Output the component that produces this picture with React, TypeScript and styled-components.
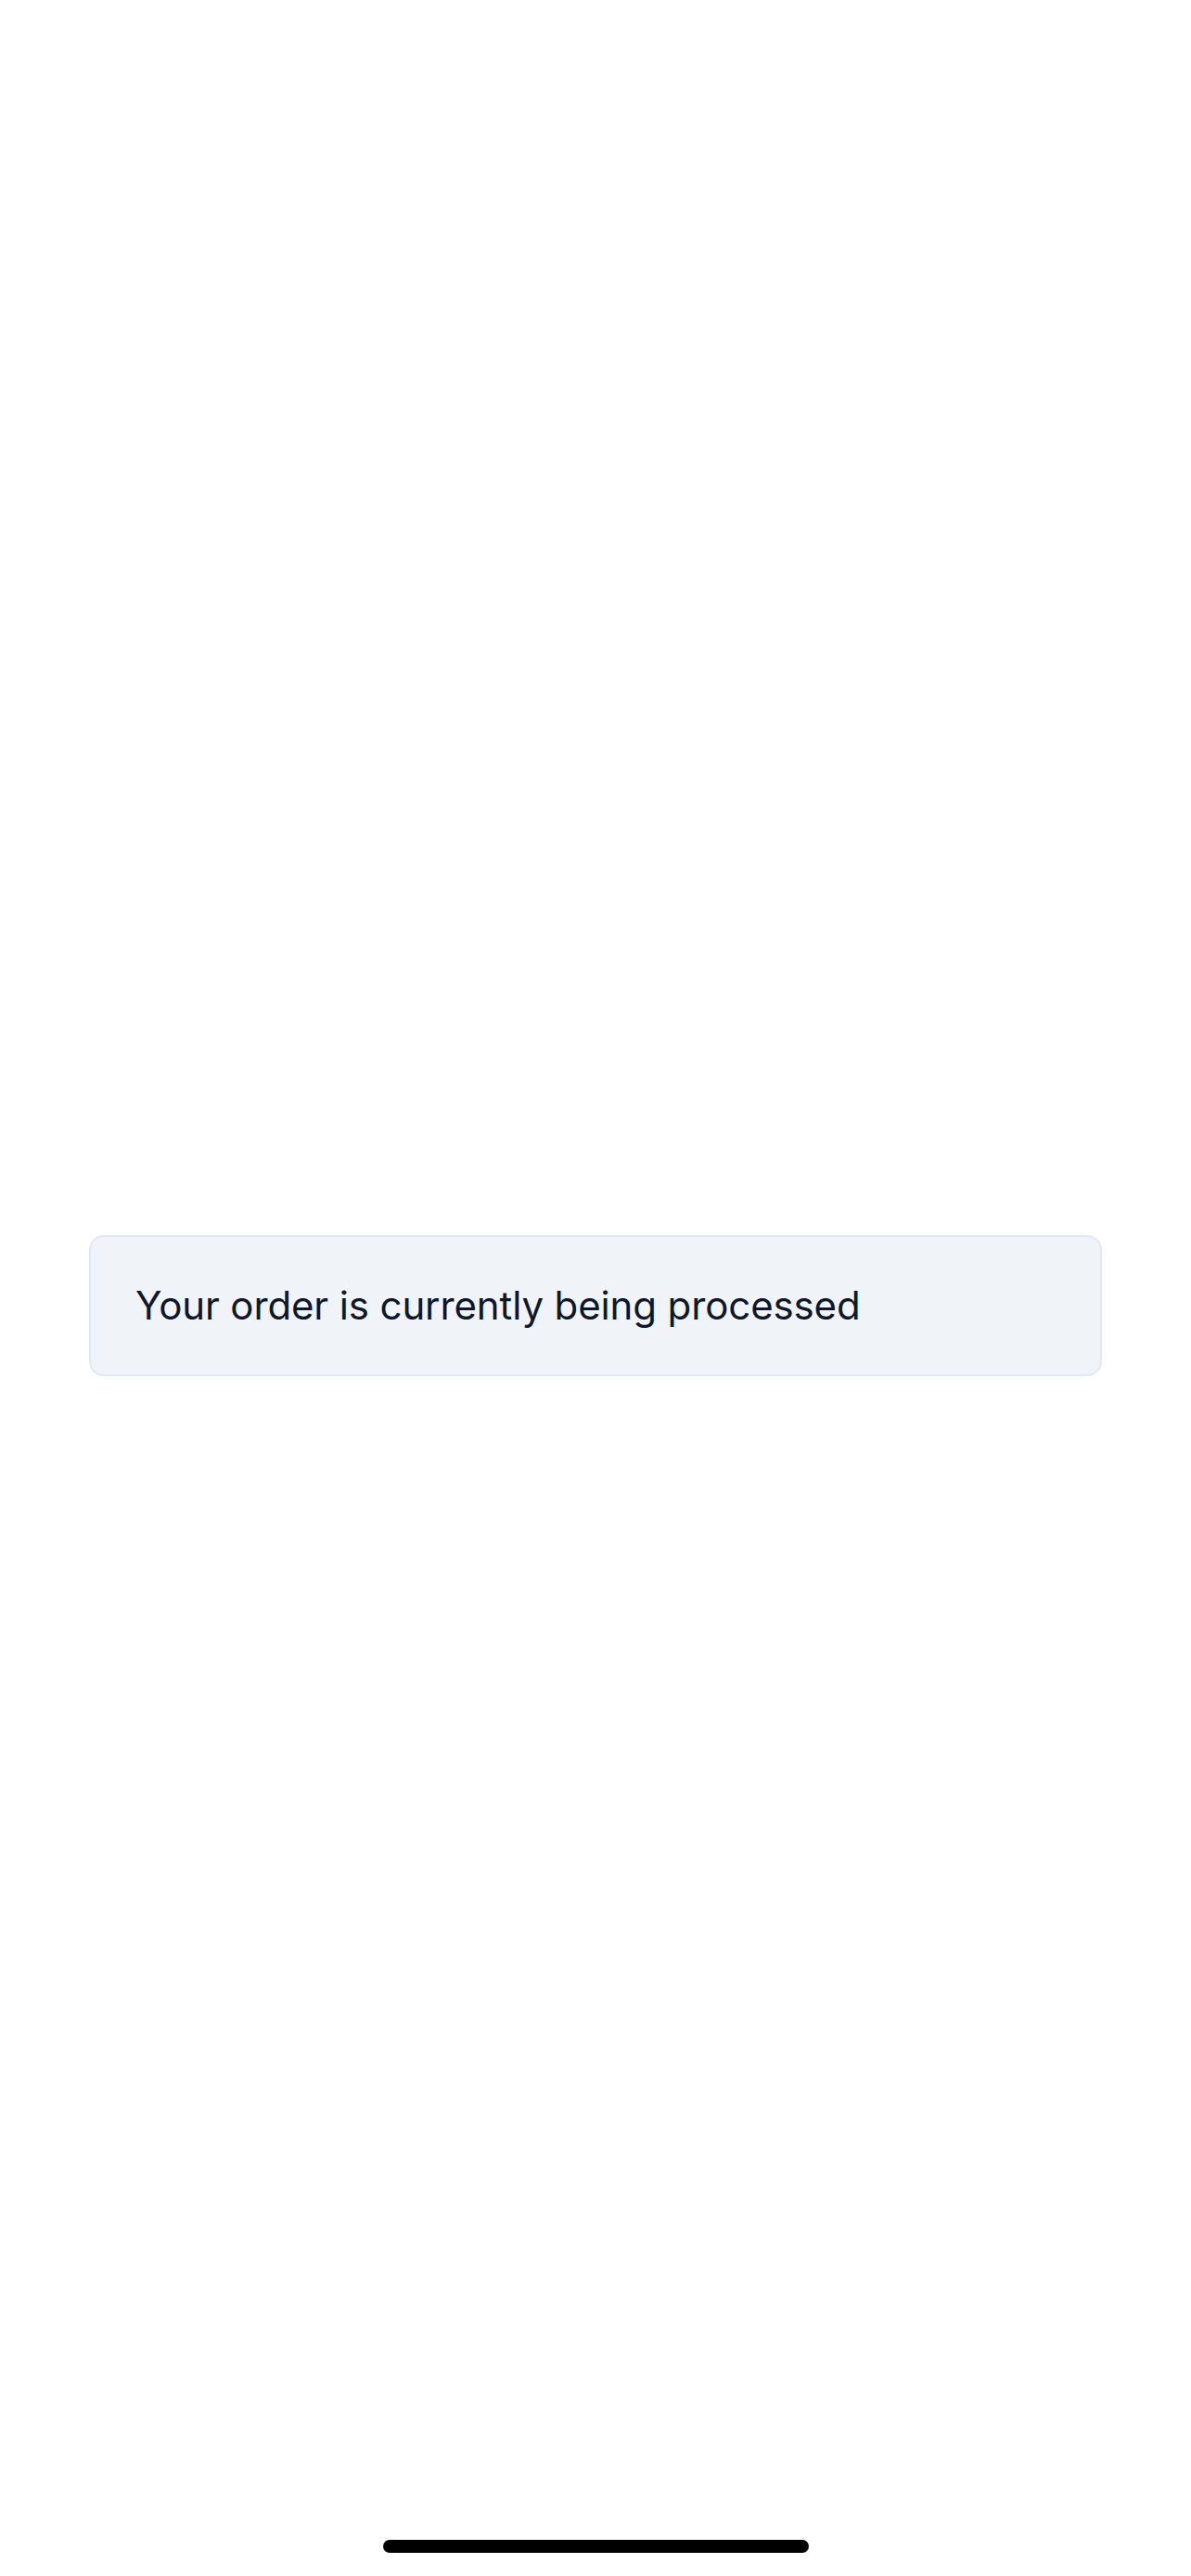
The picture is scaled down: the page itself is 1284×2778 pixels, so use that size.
import React from "react";
import styled, { createGlobalStyle } from "styled-components";

const GlobalStyle = createGlobalStyle`
  html, body { margin: 0; padding: 0; background: #ffffff; }
  * { box-sizing: border-box; }
  body { font-family: Inter, "Noto Sans", "Liberation Sans", sans-serif; }
`;

const Screen = styled.div`
  display: flex;
  flex-direction: column;
  min-height: 2778px;
  background: #ffffff;
`;

const Content = styled.main`
  flex: 1;
  display: flex;
  flex-direction: column;
  padding: 1332px 96px 0;
`;

const StatusCard = styled.div`
  height: 152px;
  display: flex;
  align-items: center;
  padding: 0 48px;
  background: #f0f4f9;
  border: 2px solid #e2e8f0;
  border-radius: 16px;
`;

const StatusText = styled.p`
  margin: 0;
  font-size: 42px;
  line-height: 1.2;
  font-weight: 440;
  letter-spacing: -0.12px;
  color: #0f172a;
`;

const HomeBar = styled.div`
  display: flex;
  justify-content: center;
  padding-bottom: 25px;
`;

const Indicator = styled.div`
  width: 459px;
  height: 14px;
  border-radius: 7px;
  background: #000000;
`;

export default function App() {
  return (
    <>
      <GlobalStyle />
      <Screen>
        <Content>
          <StatusCard>
            <StatusText>Your order is currently being processed</StatusText>
          </StatusCard>
        </Content>
        <HomeBar>
          <Indicator />
        </HomeBar>
      </Screen>
    </>
  );
}
